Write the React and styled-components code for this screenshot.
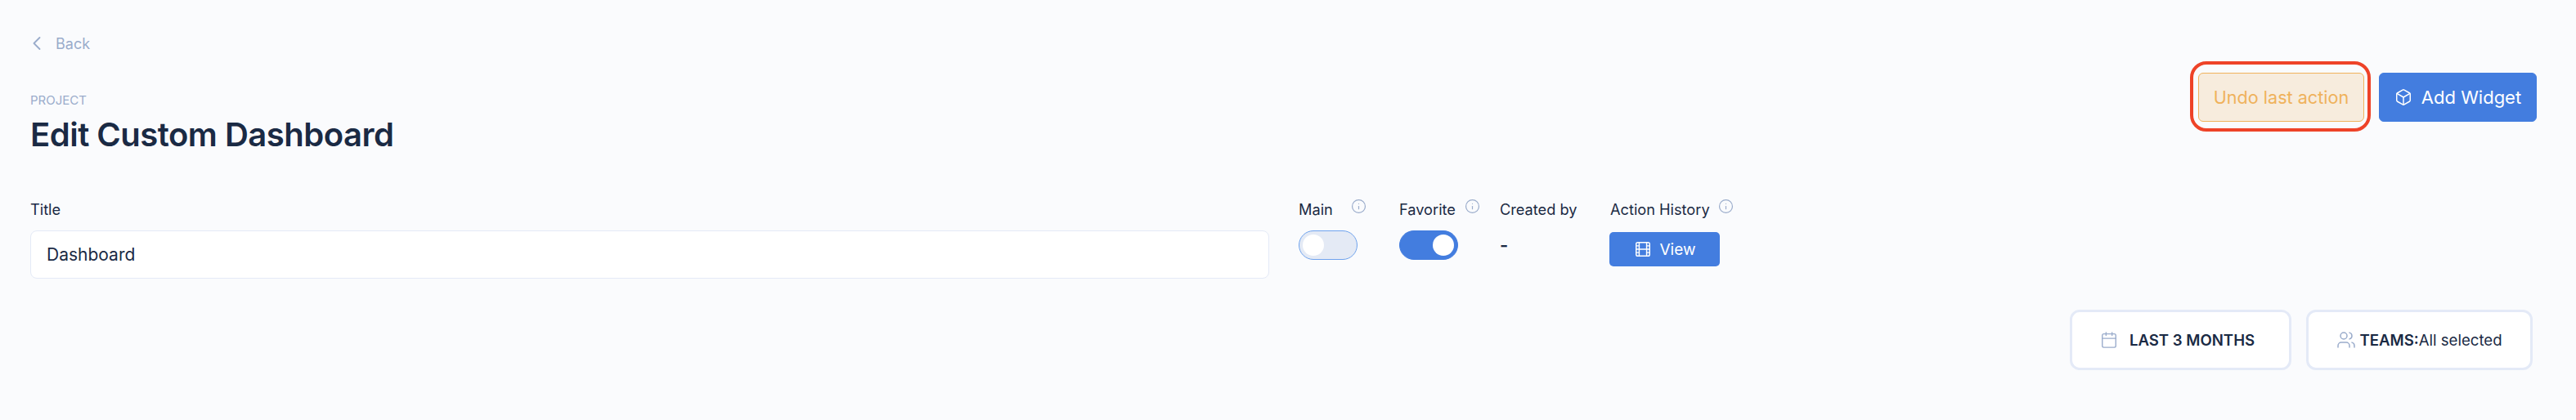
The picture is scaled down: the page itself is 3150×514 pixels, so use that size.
import React from 'react';
import styled, { createGlobalStyle } from 'styled-components';
import { ChevronLeft, Info, Box, Film, Calendar, Users } from 'lucide-react';

const GlobalStyle = createGlobalStyle`
  html, body {
    margin: 0;
    padding: 0;
    background: #fafbfd;
    font-family: "Inter", "Liberation Sans", sans-serif;
    color: #1a2a44;
  }
`;

const Page = styled.div`
  width: 3150px;
  height: 514px;
  box-sizing: border-box;
  padding: 40px 48px 0 37px;
`;

const BackLink = styled.a`
  display: flex;
  align-items: center;
  gap: 9px;
  height: 26px;
  font-size: 18px;
  color: #9aaccb;
`;

const BackIcon = styled(ChevronLeft)`
  flex: none;
  margin-left: -6px;
`;

const HeaderRow = styled.div`
  display: flex;
  justify-content: space-between;
  align-items: flex-start;
  margin-top: 48px;
`;

const TitleBlock = styled.div`
  display: flex;
  flex-direction: column;
`;

const Eyebrow = styled.span`
  font-size: 15px;
  line-height: 18px;
  color: #9aaccb;
`;

const PageTitle = styled.h1`
  margin: 10px 0 0;
  font-size: 40px;
  line-height: 46px;
  font-weight: 600;
  letter-spacing: -0.5px;
`;

const Actions = styled.div`
  display: flex;
  gap: 18px;
  margin-top: -25px;
`;

const Button = styled.button`
  display: flex;
  align-items: center;
  justify-content: center;
  gap: 11px;
  box-sizing: border-box;
  height: 60px;
  width: ${p => p.$width}px;
  border-radius: 6px;
  font-family: inherit;
  font-size: ${p => (p.$warning ? 21.6 : 22)}px;
  border: 1px solid ${p => (p.$warning ? '#f0b35c' : '#437ddf')};
  background: ${p => (p.$warning ? '#f7ecdd' : '#437ddf')};
  color: ${p => (p.$warning ? '#efb25c' : '#ffffff')};
  position: relative;
`;

const Highlight = styled.span`
  position: absolute;
  inset: -15px -9px -13px -11px;
  border: 4px solid #ee4328;
  border-radius: 20px;
`;

const FormRow = styled.div`
  display: flex;
  margin-top: 56px;
`;

const Field = styled.div`
  display: flex;
  flex-direction: column;
  width: ${p => p.$width}px;
  margin-right: ${p => p.$gap || 0}px;
`;

const LabelRow = styled.div`
  display: flex;
  align-items: flex-start;
  gap: ${p => p.$gap || 10}px;
  height: 38px;
  font-size: 18.2px;
  line-height: 24px;
  white-space: nowrap;
`;

const InfoIcon = styled(Info)`
  flex: none;
  width: 19px;
  height: 19px;
  color: #9aaccb;
  margin-top: -1px;
`;

const TextInput = styled.div`
  box-sizing: border-box;
  height: 59px;
  display: flex;
  align-items: center;
  padding-left: 19px;
  background: #ffffff;
  border: 1px solid #e4eaf7;
  border-radius: 8px;
  font-size: 21px;
`;

const Toggle = styled.div`
  box-sizing: border-box;
  width: 72px;
  height: 36px;
  padding: 4px;
  display: flex;
  justify-content: ${p => (p.$on ? 'flex-end' : 'flex-start')};
  border-radius: 18px;
  background: ${p => (p.$on ? '#437ddf' : '#e4eaf5')};
  border: 1px solid ${p => (p.$on ? '#437ddf' : '#6fa3ee')};
`;

const Knob = styled.span`
  width: 26px;
  height: 26px;
  border-radius: 50%;
  background: #ffffff;
`;

const Dash = styled.span`
  font-size: 22px;
  line-height: 36px;
  font-weight: 600;
`;

const ViewButton = styled.button`
  display: flex;
  align-items: center;
  justify-content: center;
  gap: 10px;
  width: 135px;
  height: 42px;
  margin: 2px 0 0 -1px;
  border: none;
  border-radius: 5px;
  background: #437ddf;
  color: #ffffff;
  font-family: inherit;
  font-size: 19px;
`;

const FilterRow = styled.div`
  display: flex;
  justify-content: flex-end;
  gap: 18px;
  margin-top: 38px;
  padding-right: 5px;
`;

const FilterChip = styled.div`
  display: flex;
  align-items: center;
  justify-content: center;
  gap: ${p => p.$gap}px;
  box-sizing: border-box;
  width: ${p => p.$width}px;
  height: 74px;
  padding-right: ${p => p.$inset || 0}px;
  background: #ffffff;
  border: 3px solid #e4eaf7;
  border-radius: 12px;
  font-size: 18.6px;
  white-space: nowrap;
  svg {
    color: #9aaccb;
  }
  b {
    font-weight: 600;
  }
`;

export default function App() {
  return (
    <>
      <GlobalStyle />
      <Page>
        <BackLink>
          <BackIcon size={28} strokeWidth={1.6} />
          Back
        </BackLink>
        <HeaderRow>
          <TitleBlock>
            <Eyebrow>PROJECT</Eyebrow>
            <PageTitle>Edit Custom Dashboard</PageTitle>
          </TitleBlock>
          <Actions>
            <Button $warning $width={203}>
              Undo last action
              <Highlight />
            </Button>
            <Button $width={193}>
              <Box size={22} strokeWidth={1.6} />
              Add Widget
            </Button>
          </Actions>
        </HeaderRow>
        <FormRow>
          <Field $width={1515} $gap={36}>
            <LabelRow>Title</LabelRow>
            <TextInput>Dashboard</TextInput>
          </Field>
          <Field $width={72} $gap={51}>
            <LabelRow $gap={22}>
              Main
              <InfoIcon strokeWidth={1.5} />
            </LabelRow>
            <Toggle>
              <Knob />
            </Toggle>
          </Field>
          <Field $width={72} $gap={51}>
            <LabelRow $gap={11}>
              Favorite
              <InfoIcon strokeWidth={1.5} />
            </LabelRow>
            <Toggle $on>
              <Knob />
            </Toggle>
          </Field>
          <Field $width={95} $gap={40}>
            <LabelRow>Created by</LabelRow>
            <Dash>-</Dash>
          </Field>
          <Field $width={135}>
            <LabelRow>
              Action History
              <InfoIcon strokeWidth={1.5} />
            </LabelRow>
            <ViewButton>
              <Film size={22} strokeWidth={1.6} />
              View
            </ViewButton>
          </Field>
        </FormRow>
        <FilterRow>
          <FilterChip $width={271} $gap={14} $inset={8}>
            <Calendar size={22} strokeWidth={1.5} />
            <b>LAST 3 MONTHS</b>
          </FilterChip>
          <FilterChip $width={277} $gap={4}>
            <Users size={24} strokeWidth={1.5} />
            <span>
              <b>TEAMS:</b>All selected
            </span>
          </FilterChip>
        </FilterRow>
      </Page>
    </>
  );
}
